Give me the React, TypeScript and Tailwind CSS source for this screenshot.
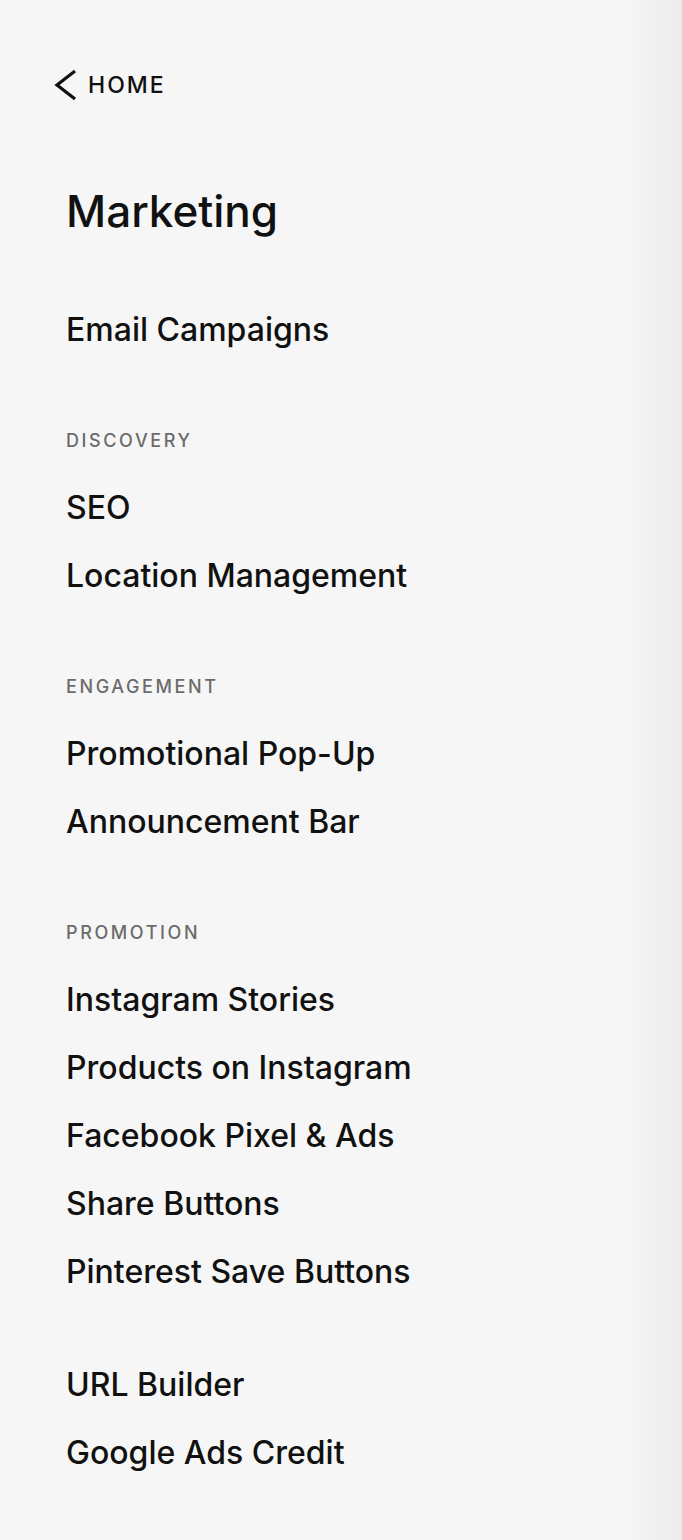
import React from "react";

const font = { fontFamily: "Inter, 'Noto Sans', sans-serif" };

function Item({ label }: { label: string }) {
  return (
    <div className="h-[68px] leading-[68px] text-[32px] font-medium text-[#111111] whitespace-nowrap">
      {label}
    </div>
  );
}

function Header({ label, mt }: { label: string; mt: string }) {
  return (
    <div
      className={`${mt} h-[30px] leading-[30px] mb-[18px] text-[18px] font-medium tracking-[2.6px] text-[#6b6b6b]`}
    >
      {label}
    </div>
  );
}

export default function App() {
  return (
    <div className="flex min-h-[1540px] w-full bg-[#f6f6f6]" style={font}>
      <div className="flex flex-1 flex-col pt-[65px]">
        <div className="ml-[54px] flex h-[40px] items-center gap-[11px]">
          <svg width="23" height="32" viewBox="0 0 23 32" fill="none">
            <polyline
              points="21,2 3,16 21,30"
              stroke="#111111"
              strokeWidth="3.2"
              strokeLinecap="butt"
              strokeLinejoin="miter"
            />
          </svg>
          <span className="text-[23px] font-medium leading-[40px] tracking-[2px] text-[#111111]">
            HOME
          </span>
        </div>
        <div className="ml-[66px] flex flex-col">
          <div className="mt-[81px] h-[50px] leading-[50px] text-[44px] font-medium text-[#111111]">
            Marketing
          </div>
          <div className="mt-[60px]">
            <Item label="Email Campaigns" />
          </div>
          <Header label="DISCOVERY" mt="mt-[62px]" />
          <Item label="SEO" />
          <Item label="Location Management" />
          <Header label="ENGAGEMENT" mt="mt-[62px]" />
          <Item label="Promotional Pop-Up" />
          <Item label="Announcement Bar" />
          <Header label="PROMOTION" mt="mt-[62px]" />
          <Item label="Instagram Stories" />
          <Item label="Products on Instagram" />
          <Item label="Facebook Pixel & Ads" />
          <Item label="Share Buttons" />
          <Item label="Pinterest Save Buttons" />
          <div className="mt-[45px]">
            <Item label="URL Builder" />
          </div>
          <Item label="Google Ads Credit" />
        </div>
      </div>
      <div className="w-[56px] shrink-0 bg-gradient-to-r from-[#f6f6f6] to-[#ebebeb]" />
    </div>
  );
}
